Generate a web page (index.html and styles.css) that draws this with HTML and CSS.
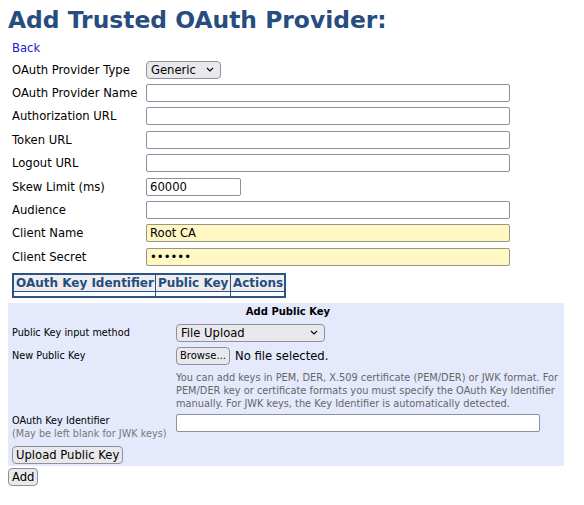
FILE: index.html
```html
<!DOCTYPE html>
<html lang="en">
<head>
<meta charset="UTF-8">
<title>Add Trusted OAuth Provider</title>
<link rel="stylesheet" href="styles.css">
</head>
<body>

<h1 class="page-title">Add Trusted OAuth Provider:</h1>
<a class="back" href="#">Back</a>

<table class="provider-form">
  <tr>
    <td class="label">OAuth Provider Type</td>
    <td>
      <select class="select type-select">
        <option>Generic</option>
        <option>Azure</option>
        <option>Keycloak</option>
      </select>
    </td>
  </tr>
  <tr>
    <td class="label">OAuth Provider Name</td>
    <td><input type="text" class="text"></td>
  </tr>
  <tr>
    <td class="label">Authorization URL</td>
    <td><input type="text" class="text"></td>
  </tr>
  <tr>
    <td class="label">Token URL</td>
    <td><input type="text" class="text"></td>
  </tr>
  <tr>
    <td class="label">Logout URL</td>
    <td><input type="text" class="text"></td>
  </tr>
  <tr>
    <td class="label">Skew Limit (ms)</td>
    <td><input type="text" class="text short" value="60000"></td>
  </tr>
  <tr>
    <td class="label">Audience</td>
    <td><input type="text" class="text"></td>
  </tr>
  <tr>
    <td class="label">Client Name</td>
    <td><input type="text" class="text filled" value="Root CA"></td>
  </tr>
  <tr>
    <td class="label">Client Secret</td>
    <td><input type="password" class="text filled" value="secret"></td>
  </tr>
</table>

<table class="keys">
  <tr>
    <th class="col-kid">OAuth Key Identifier</th>
    <th class="col-key">Public Key</th>
    <th class="col-actions">Actions</th>
  </tr>
  <tr class="empty-row">
    <td></td><td></td><td></td>
  </tr>
</table>

<div class="key-panel">
  <div class="panel-title">Add Public Key</div>
  <div class="panel-row method-row">
    <div class="small-label">Public Key input method</div>
    <select class="select method-select">
      <option>File Upload</option>
      <option>Text</option>
    </select>
  </div>
  <div class="panel-row file-row">
    <div class="small-label">New Public Key</div>
    <div class="file-field">
      <button class="btn browse">Browse...</button>
      <span>No file selected.</span>
    </div>
  </div>
  <div class="panel-row help-row">
    <div></div>
    <p class="help">You can add keys in PEM, DER, X.509 certificate (PEM/DER) or JWK format. For<br>
      PEM/DER key or certificate formats you must specify the OAuth Key Identifier<br>
      manually. For JWK keys, the Key Identifier is automatically detected.</p>
  </div>
  <div class="panel-row kid-row">
    <div class="small-label">
      OAuth Key Identifier
      <div class="hint">(May be left blank for JWK keys)</div>
    </div>
    <input type="text" class="text kid">
  </div>
  <button class="btn upload">Upload Public Key</button>
</div>

<button class="btn add">Add</button>

</body>
</html>
```

FILE: styles.css
```css
body {
  margin: 8px;
  font-family: "DejaVu Sans", Verdana, sans-serif;
  font-size: 11.6px;
  color: #000;
  background: #fff;
}

.page-title {
  margin: 0 0 8px 0;
  font-size: 23.4px;
  line-height: 24px;
  font-weight: bold;
  color: #264d7e;
}

.back {
  display: block;
  margin-left: 4px;
  color: #1a1acb;
  text-decoration: none;
  line-height: 16px;
}

/* provider settings */
.provider-form {
  border-spacing: 0;
  margin-top: 2px;
  table-layout: fixed;
}

.provider-form td {
  padding: 2px 4px;
  height: 19.4px;
  vertical-align: middle;
}

.provider-form td.label {
  width: 126px;
  white-space: nowrap;
}

input.text {
  box-sizing: border-box;
  width: 364px;
  height: 18px;
  margin: 0;
  padding: 0 3px;
  border: 1px solid #8f8f9d;
  border-radius: 2px;
  background: #fff;
  font-family: "DejaVu Sans", Verdana, sans-serif;
  font-size: 11.6px;
  color: #000;
  display: block;
}

input.text.short {
  width: 95px;
}

input.text.filled {
  background: #fff7c4;
  border-color: #9c9483;
}

.select {
  -webkit-appearance: none;
  appearance: none;
  box-sizing: border-box;
  height: 18px;
  margin: 0;
  padding: 0 18px 0 4px;
  border: 1px solid #8f8f9d;
  border-radius: 4px;
  background-color: #e9e9ed;
  background-image: url("data:image/svg+xml,%3Csvg xmlns='http://www.w3.org/2000/svg' width='8' height='5' viewBox='0 0 8 5'%3E%3Cpath d='M1 1l3 3 3-3' fill='none' stroke='%23000' stroke-width='1.1'/%3E%3C/svg%3E");
  background-repeat: no-repeat;
  background-position: right 6px center;
  font-family: "DejaVu Sans", Verdana, sans-serif;
  font-size: 11.6px;
  color: #000;
  display: block;
}

.type-select {
  width: 75px;
}

.method-select {
  width: 149px;
}

/* key list */
.keys {
  margin: 4px 0 0 4px;
  border-spacing: 0;
  border: 2px solid #2d5284;
  table-layout: fixed;
}

.keys th {
  box-sizing: border-box;
  border-right: 1px solid #2d5284;
  border-bottom: 1px solid #2d5284;
  background: #eeeef0;
  color: #264d7e;
  font-weight: bold;
  font-size: 12px;
  line-height: 14px;
  padding: 1px 1px 1px 2px;
  text-align: left;
  white-space: nowrap;
}

.keys .col-kid {
  width: 139px;
}

.keys .col-key {
  width: 75px;
}

.keys .col-actions {
  width: 51px;
}

.keys td {
  border-right: 1px solid #2d5284;
  height: 4px;
  padding: 0;
}

.keys th:last-child,
.keys td:last-child {
  border-right: none;
}

/* upload panel */
.key-panel {
  width: 556px;
  margin-top: 5px;
  padding: 2px 0 2px 4px;
  box-sizing: border-box;
  background: #e4e9fc;
}

.panel-title {
  text-align: center;
  font-weight: bold;
  font-size: 10px;
  line-height: 13px;
}

.panel-row {
  display: grid;
  grid-template-columns: 164px 1fr;
  align-items: center;
}

.method-row {
  margin-top: 6px;
}

.file-row {
  margin-top: 5px;
}

.help-row {
  margin-top: 6.5px;
}

.kid-row {
  margin-top: 4px;
  align-items: start;
}

.small-label {
  font-size: 9.7px;
  line-height: 13px;
}

.hint {
  color: #777;
}

.file-field {
  display: flex;
  align-items: center;
  gap: 5px;
}

.help {
  margin: 0;
  color: #666;
  font-size: 9.8px;
  line-height: 13px;
  white-space: nowrap;
}

input.text.kid {
  width: 364px;
}

.btn {
  box-sizing: border-box;
  margin: 0;
  padding: 0 3px;
  height: 18px;
  border: 1px solid #8f8f9d;
  border-radius: 4px;
  background: #e9e9ed;
  font-family: "DejaVu Sans", Verdana, sans-serif;
  font-size: 11.6px;
  color: #000;
}

.btn.browse {
  font-size: 10px;
}

.btn.upload {
  display: block;
  margin-top: 6px;
}

.btn.add {
  display: block;
  margin-top: 2px;
}
```
